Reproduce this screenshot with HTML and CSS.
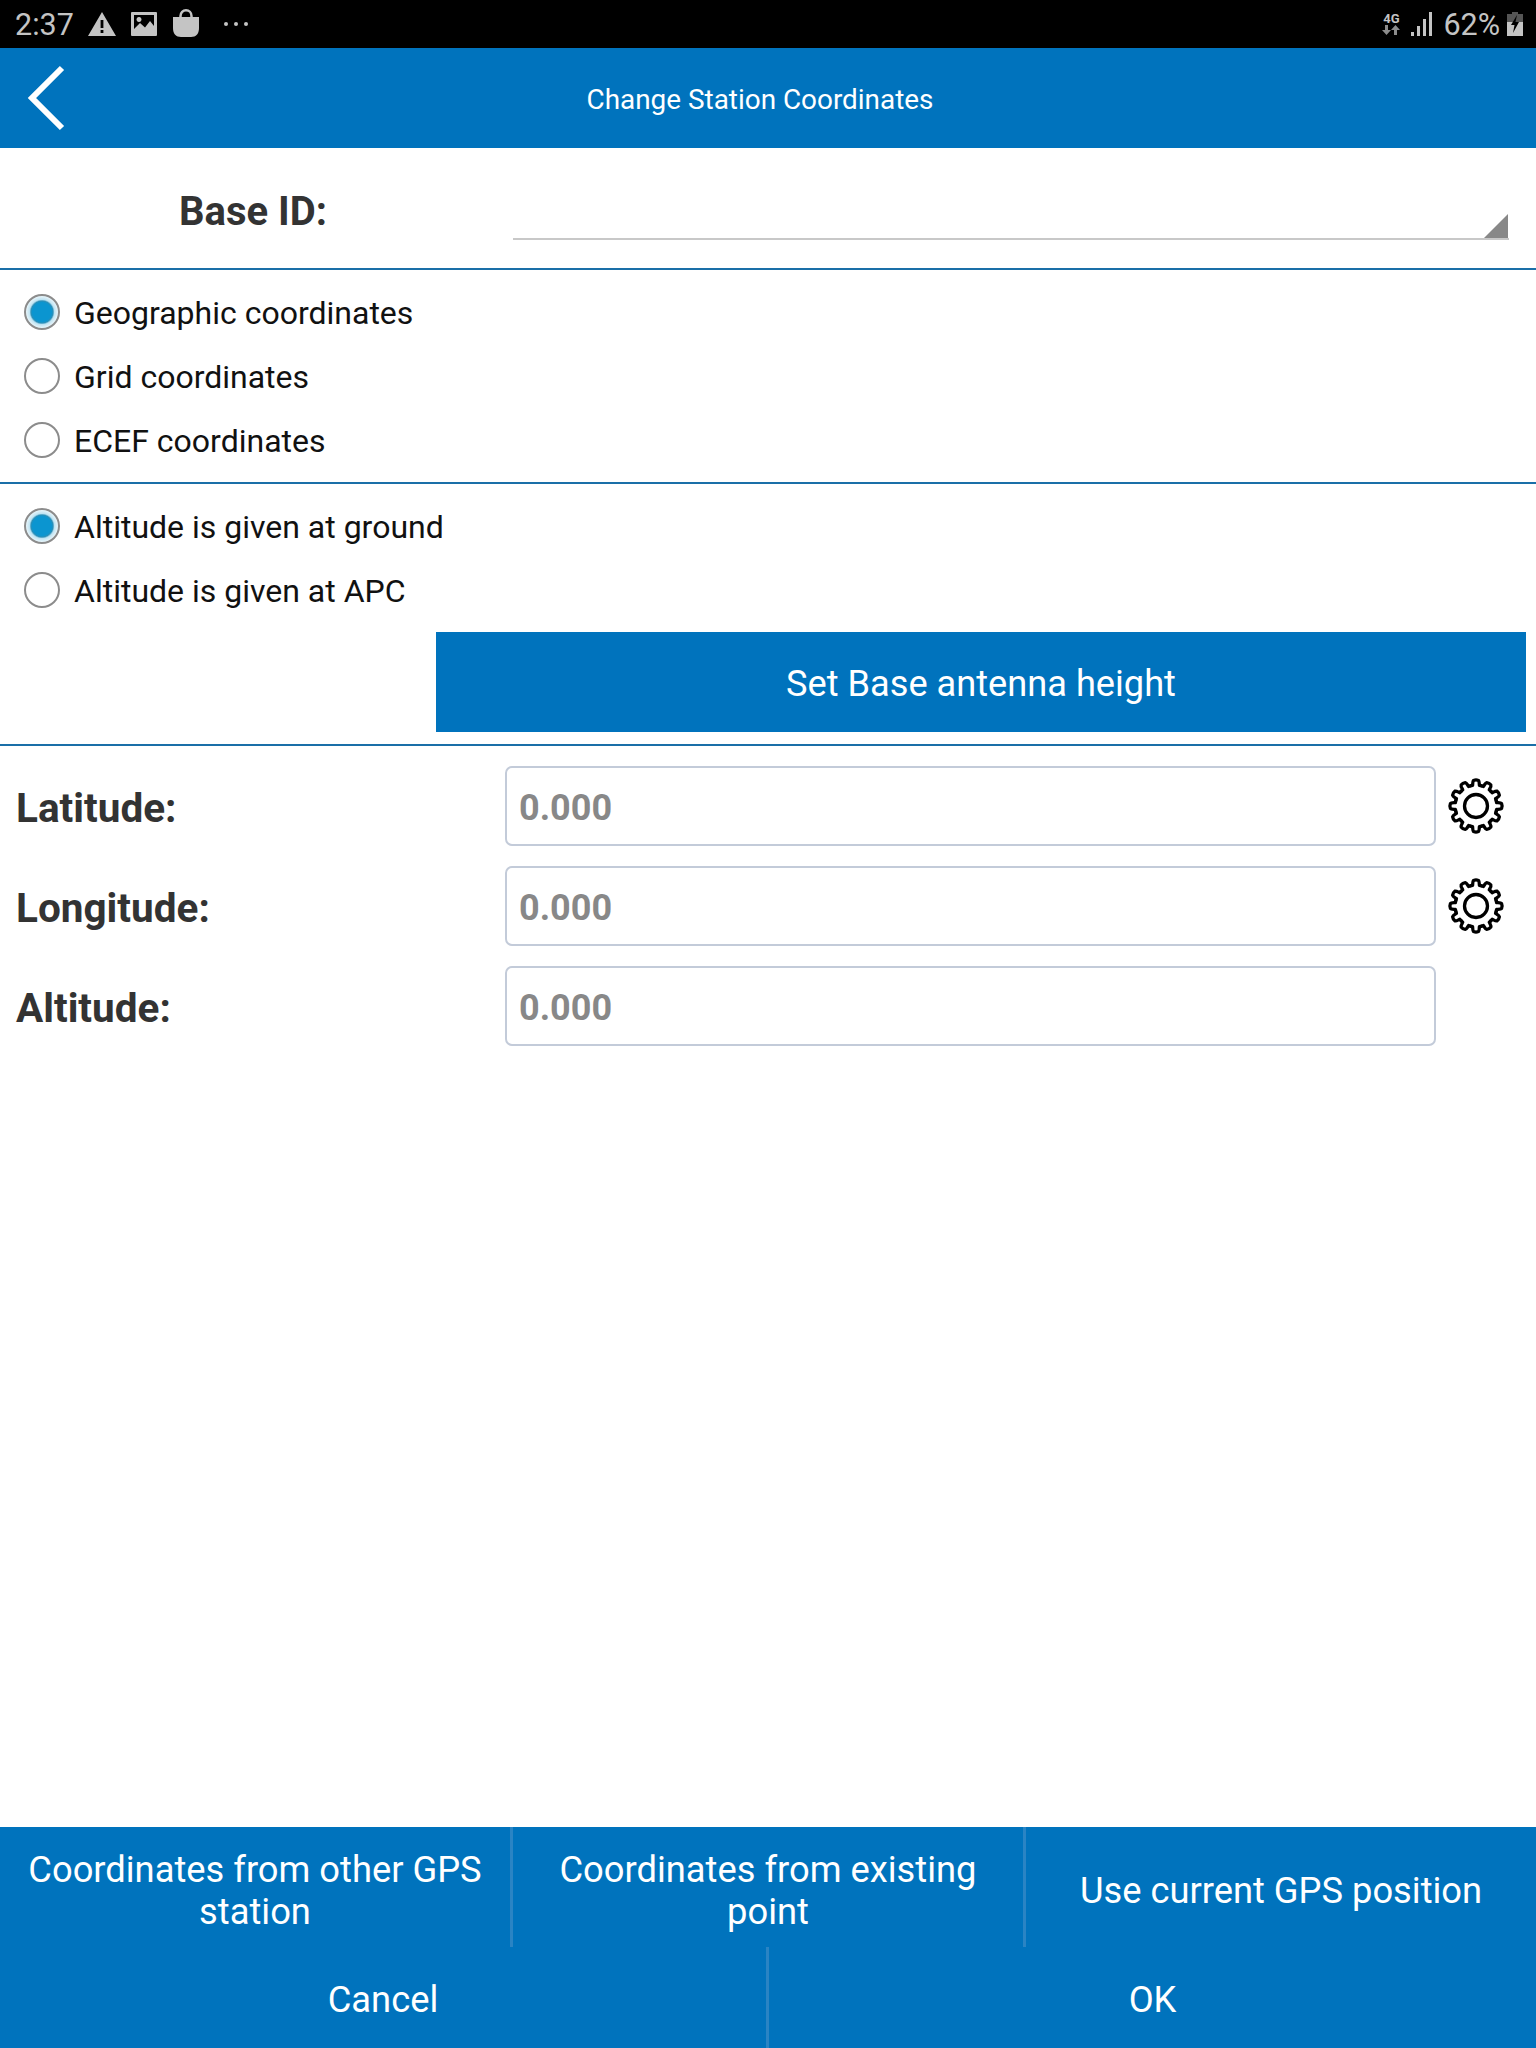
FILE: index.html
```html
<!DOCTYPE html>
<html lang="en">
<head>
<meta charset="utf-8">
<title>Change Station Coordinates</title>
<link rel="stylesheet" href="styles.css">
</head>
<body>
<svg class="defs" width="0" height="0" aria-hidden="true">
  <defs>
    <path id="tooth" d="M-5.5-20.2L-3.4-20.6C-3.2-22.500-3.400-24.800-2.400-25.600C-1-26.200 1-26.200 2.400-25.600C3.400-24.800 3.200-22.500 3.400-20.600L5.500-20.200"/>
    <symbol id="gear" viewBox="-30 -30 60 60">
      <g fill="none" stroke="#000" stroke-width="3.300" stroke-linejoin="round" stroke-linecap="round">
        <use href="#tooth"/>
        <use href="#tooth" transform="rotate(30)"/>
        <use href="#tooth" transform="rotate(60)"/>
        <use href="#tooth" transform="rotate(90)"/>
        <use href="#tooth" transform="rotate(120)"/>
        <use href="#tooth" transform="rotate(150)"/>
        <use href="#tooth" transform="rotate(180)"/>
        <use href="#tooth" transform="rotate(210)"/>
        <use href="#tooth" transform="rotate(240)"/>
        <use href="#tooth" transform="rotate(270)"/>
        <use href="#tooth" transform="rotate(300)"/>
        <use href="#tooth" transform="rotate(330)"/>
        <circle r="11.5"/>
      </g>
    </symbol>
  </defs>
</svg>
<div class="app">
  <div class="status">
    <span class="time">2:37</span>
    <svg class="si si-warn" viewBox="0 0 28 24"><path fill="#c4c4c4" fill-rule="evenodd" d="M14 0L28 24H0ZM12.6 8V16H15.4V8ZM12.6 18V21H15.4V18Z"/></svg>
    <svg class="si si-img" viewBox="0 0 26 24"><path fill="#c4c4c4" fill-rule="evenodd" d="M1 0H25a1 1 0 0 1 1 1V23a1 1 0 0 1-1 1H1a1 1 0 0 1-1-1V1a1 1 0 0 1 1-1ZM3 3V17L9 11L14 15.500L19 9L23 14V3ZM8 5a2.500 2.500 0 1 0 .01 0Z"/></svg>
    <svg class="si si-bag" viewBox="0 0 26 28"><path fill="#c4c4c4" d="M0 8H26V19C26 25 23 28 18 28H8C3 28 0 25 0 19Z"/><path fill="none" stroke="#c4c4c4" stroke-width="2.500" d="M7.500 9V7C7.500 3.500 10 1.300 13 1.300S18.500 3.500 18.500 7V9"/></svg>
    <span class="dots"><i></i><i></i><i></i></span>
    <span class="status-space"></span>
    <span class="net"><b>4G</b><svg viewBox="0 0 18 10" class="net-arrows"><path fill="#8c8c8c" d="M3 0H6V5H9L4.500 10L0 5H3ZM12 10H15V5H18L13.500 0L9 5H12Z"/></svg></span>
    <svg class="si si-signal" viewBox="0 0 22 24"><path fill="#c4c4c4" d="M0 20H3V24H0ZM6 14H9V24H6ZM12 7H15V24H12ZM18 0H21V24H18Z"/></svg>
    <span class="pct">62%</span>
    <svg class="si si-batt" viewBox="0 0 16 24"><path fill="#555" d="M5 0H11V2H16V10H0V2H5Z"/><path fill="#c4c4c4" d="M0 10H16V24H0Z"/><path fill="#000" d="M10 3L4 13H7.500L6 21L12 10H8.500Z"/></svg>
  </div>

  <header class="header">
    <svg class="back" viewBox="0 0 40 66"><path fill="none" stroke="#fff" stroke-width="6" d="M37 3L7 33L37 63"/></svg>
    <h1 class="title">Change Station Coordinates</h1>
  </header>

  <section class="base">
    <div class="base-label">Base ID:</div>
    <div class="base-select"></div>
  </section>

  <section class="group group-coords">
    <label class="radio-row"><span class="radio on"></span><span class="radio-text">Geographic coordinates</span></label>
    <label class="radio-row"><span class="radio"></span><span class="radio-text">Grid coordinates</span></label>
    <label class="radio-row"><span class="radio"></span><span class="radio-text">ECEF coordinates</span></label>
  </section>

  <section class="group group-alt">
    <label class="radio-row"><span class="radio on"></span><span class="radio-text">Altitude is given at ground</span></label>
    <label class="radio-row"><span class="radio"></span><span class="radio-text">Altitude is given at APC</span></label>
    <div class="antenna-wrap"><div class="antenna">Set Base antenna height</div></div>
  </section>

  <section class="fields">
    <div class="field"><div class="f-label">Latitude:</div><div class="f-input">0.000</div><svg class="gear"><use href="#gear"/></svg></div>
    <div class="field"><div class="f-label">Longitude:</div><div class="f-input">0.000</div><svg class="gear"><use href="#gear"/></svg></div>
    <div class="field"><div class="f-label">Altitude:</div><div class="f-input">0.000</div></div>
  </section>

  <div class="grow"></div>

  <footer class="footer">
    <div class="row-three">
      <div class="fbtn">Coordinates from other GPS station</div>
      <div class="fbtn">Coordinates from existing point</div>
      <div class="fbtn">Use current GPS position</div>
    </div>
    <div class="row-two">
      <div class="fbtn">Cancel</div>
      <div class="fbtn">OK</div>
    </div>
  </footer>
</div>
</body>
</html>
```

FILE: styles.css
```css
* { box-sizing: border-box; }
html, body { margin: 0; padding: 0; background: #fff; }
body { font-family: Roboto, "Liberation Sans", sans-serif; }
.defs { position: absolute; }
.app { width: 1536px; height: 2048px; display: flex; flex-direction: column; overflow: hidden; }

.status { height: 48px; background: #000; display: flex; align-items: center; padding: 0 13px 0 15px; color: #c4c4c4; flex: none; }
.time { font-size: 30.5px; width: 73px; }
.si { display: block; flex: none; }
.si-warn { width: 28px; height: 24px; }
.si-img { width: 26px; height: 24px; margin-left: 15px; }
.si-bag { width: 26px; height: 28px; margin-left: 16px; margin-top: -2px; }
.dots { display: flex; gap: 6px; margin-left: 25px; }
.dots i { width: 4px; height: 4px; border-radius: 50%; background: #c4c4c4; }
.status-space { flex: 1; }
.net { display: flex; flex-direction: column; align-items: center; width: 18px; margin-top: -1px; }
.net b { font-size: 13px; line-height: 12px; color: #c4c4c4; font-weight: 700; }
.net-arrows { width: 18px; height: 10px; display: block; }
.si-signal { width: 22px; height: 24px; margin-left: 11px; }
.pct { font-size: 30.5px; margin-left: 10px; }
.si-batt { width: 16px; height: 24px; margin-left: 7px; }

.header { height: 100px; background: #0073bd; display: flex; align-items: center; flex: none; padding-right: 86px; }
.back { width: 40px; height: 66px; margin-left: 25px; margin-right: 5px; flex: none; }
.title { flex: 1; margin: 0; padding-top: 3px; text-align: center; color: #fff; font-weight: 400; font-size: 27.900px; }

.base { height: 122px; display: flex; flex: none; border-bottom: 2px solid #1a6fa8; }
.base-label { width: 513px; padding: 41px 0 0 179px; font-size: 40px; font-weight: 700; color: #333; line-height: 45px; }
.base-select { width: 996px; height: 92px; border-bottom: 2px solid #c8c8c8; position: relative; }
.base-select::after { content: ""; position: absolute; right: 1px; bottom: 0; width: 24px; height: 24px; background: #888; clip-path: polygon(100% 0, 100% 100%, 0 100%); }

.group { flex: none; border-bottom: 2px solid #1a6fa8; }
.group-coords { height: 214px; padding-top: 10px; }
.group-alt { height: 262px; padding-top: 10px; }
.radio-row { height: 64px; display: flex; align-items: center; padding-left: 24px; font-size: 32px; color: #111; }
.radio { width: 36px; height: 36px; border-radius: 50%; border: 2px solid #8c8c8c; margin-right: 14px; background: #fff; flex: none; }
.radio.on { background: radial-gradient(circle, #0b95d0 0, #0b95d0 9.500px, #2a8fb8 11px, #bfe3f2 12.500px, #e9f6fb 16px); }
.radio-text { padding-top: 2px; }
.antenna-wrap { display: flex; justify-content: flex-end; padding: 10px 10px 0 0; }
.antenna { width: 1090px; height: 100px; padding-top: 3px; background: #0073bd; color: #fff; display: flex; align-items: center; justify-content: center; font-size: 36.200px; }

.fields { flex: none; padding-top: 20px; display: flex; flex-direction: column; gap: 20px; }
.field { height: 80px; display: flex; align-items: center; }
.f-label { width: 505px; padding: 4px 0 0 16px; font-size: 40.500px; font-weight: 700; color: #333; }
.f-input { width: 931px; height: 80px; border: 2px solid #c3cbd9; border-radius: 7px; padding: 4px 0 0 12px; display: flex; align-items: center; font-size: 36px; font-weight: 700; color: #888; }
.gear { width: 60px; height: 60px; margin-left: 10px; flex: none; }

.grow { flex: 1; }
.footer { flex: none; background: #0073bd; color: #fff; }
.row-three { display: grid; grid-template-columns: 510px 513px 513px; height: 120px; }
.row-two { display: grid; grid-template-columns: 766px 770px; height: 101px; }
.fbtn { display: flex; align-items: center; justify-content: center; text-align: center; padding: 0 18px; font-size: 36.300px; line-height: 42px; border-left: 3px solid #2a84c4; }
.row-three .fbtn { padding-top: 8px; }
.row-two .fbtn { padding-top: 5px; }
.fbtn:first-child { border-left: 0; }
```
